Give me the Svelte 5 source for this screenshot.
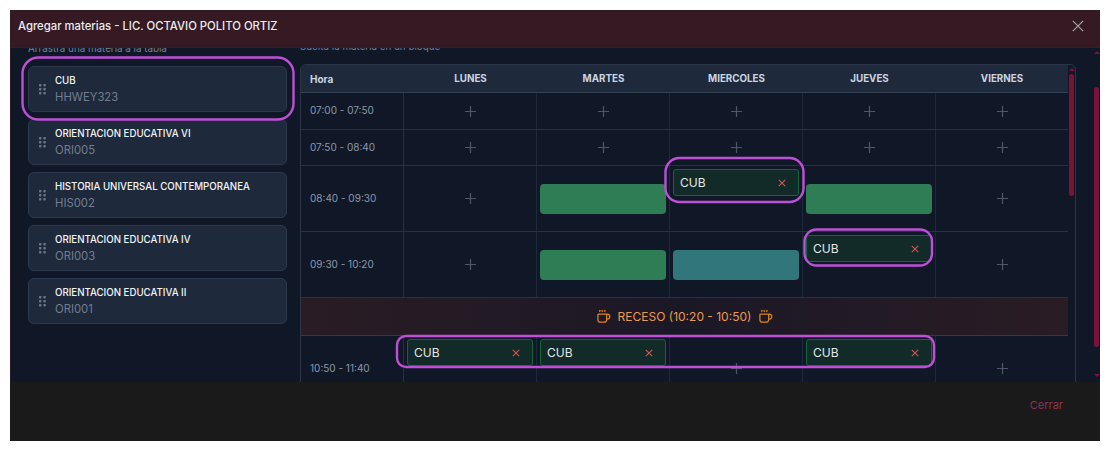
<script>
  const subjects = [
    { name: 'CUB', code: 'HHWEY323' },
    { name: 'ORIENTACION EDUCATIVA VI', code: 'ORI005' },
    { name: 'HISTORIA UNIVERSAL CONTEMPORANEA', code: 'HIS002' },
    { name: 'ORIENTACION EDUCATIVA IV', code: 'ORI003' },
    { name: 'ORIENTACION EDUCATIVA II', code: 'ORI001' }
  ];
  const days = ['LUNES', 'MARTES', 'MIERCOLES', 'JUEVES', 'VIERNES'];
  const rows = [
    { time: '07:00 - 07:50', size: 'r1', cells: ['', '', '', '', ''] },
    { time: '07:50 - 08:40', size: 'r2', cells: ['', '', '', '', ''] },
    { time: '08:40 - 09:30', size: 'r3', cells: ['', 'green', 'chip', 'green', ''] },
    { time: '09:30 - 10:20', size: 'r3', cells: ['', 'green', 'teal', 'chip', ''] },
    { recess: 'RECESO (10:20 - 10:50)' },
    { time: '10:50 - 11:40', size: 'r3', cells: ['chip', 'chip', '', 'chip', ''] }
  ];
</script>

{#snippet coffee()}
  <svg class="coffee" viewBox="0 0 24 24" fill="none" stroke="currentColor" stroke-width="2" stroke-linecap="round" stroke-linejoin="round">
    <path d="M10 2v2" /><path d="M14 2v2" /><path d="M6 2v2" />
    <path d="M16 8a1 1 0 0 1 1 1v8a4 4 0 0 1-4 4H7a4 4 0 0 1-4-4V9a1 1 0 0 1 1-1h14a4 4 0 1 1 0 8h-1" />
  </svg>
{/snippet}

<div class="modal">
  <header class="head">
    <h1>Agregar materias - LIC. OCTAVIO POLITO ORTIZ</h1>
    <button class="close" aria-label="Cerrar">
      <svg viewBox="0 0 12 12" fill="none" stroke="currentColor" stroke-width="1.2"><path d="M.8.8l10.4 10.4M11.2.8.8 11.2" /></svg>
    </button>
  </header>

  <div class="body">
    <div class="content">
      <aside class="left">
        <p class="hint">Arrastra una materia a la tabla</p>
        <div class="list">
          {#each subjects as s}
            <div class="card">
              <svg class="grip" viewBox="0 0 7 11" fill="currentColor">
                {#each [0, 4, 8] as y}
                  <rect x="0" {y} width="2.4" height="2.4" rx=".6" />
                  <rect x="4.4" {y} width="2.4" height="2.4" rx=".6" />
                {/each}
              </svg>
              <div>
                <div class="name">{s.name}</div>
                <div class="code">{s.code}</div>
              </div>
            </div>
          {/each}
        </div>
      </aside>

      <section class="right">
        <p class="hint hint2">Suelta la materia en un bloque</p>
        <div class="table">
          <div class="grid">
            <div class="row thead">
              <div class="hora">Hora</div>
              {#each days as d}<div class="day">{d}</div>{/each}
            </div>
            {#each rows as r}
              {#if r.recess}
                <div class="recess">
                  {@render coffee()}<span>{r.recess}</span>{@render coffee()}
                </div>
              {:else}
                <div class="row {r.size}">
                  <div class="time">{r.time}</div>
                  {#each r.cells as c}
                    <div class="cell">
                      {#if c === 'chip'}
                        <div class="chip">
                          <span>CUB</span>
                          <svg viewBox="0 0 8 8" fill="none" stroke="currentColor" stroke-width="1.1"><path d="M.8.8l6.4 6.4M7.2.8.8 7.2" /></svg>
                        </div>
                      {:else if c}
                        <div class="block {c}"></div>
                      {:else}
                        <svg class="plus" viewBox="0 0 11 11" fill="none" stroke="currentColor" stroke-width="1.2"><path d="M5.5 0v11M0 5.5h11" /></svg>
                      {/if}
                    </div>
                  {/each}
                </div>
              {/if}
            {/each}
          </div>
          <div class="rail inner">
            <i class="up"></i>
            <b></b>
          </div>
        </div>
      </section>
    </div>
    <div class="rail outer">
      <i class="up"></i>
      <b></b>
      <i class="down"></i>
    </div>
  </div>

  <footer class="foot"><button class="cerrar">Cerrar</button></footer>

  <svg class="marks" viewBox="0 0 1109 451" fill="none" stroke="#bd50d6" stroke-width="2.4">
    <rect x="22.5" y="57.5" width="271" height="62" rx="16" />
    <rect x="665.5" y="158" width="138" height="44" rx="14" />
    <rect x="804.5" y="229.5" width="127.5" height="36" rx="12" />
    <rect x="397" y="336" width="537" height="31" rx="9" />
  </svg>
</div>

<style>
  :global(body) {
    margin: 0;
    background: #fff;
  }
  .modal {
    position: relative;
    box-sizing: border-box;
    width: 1090px;
    height: 431px;
    margin: 10px 0 0 10px;
    display: flex;
    flex-direction: column;
    background: #101828;
    font-family: Inter, "Liberation Sans", sans-serif;
    overflow: hidden;
  }
  .head {
    box-sizing: border-box;
    height: 38px;
    flex: none;
    display: flex;
    align-items: center;
    justify-content: space-between;
    padding: 0 16px 6px 8px;
    background: #351923;
    border-bottom: 1px solid #4d1428;
    position: relative;
    z-index: 1;
  }
  h1 {
    margin: 0;
    font-size: 11.3px;
    font-weight: 500;
    color: #ececee;
  }
  .close {
    width: 12px;
    height: 12px;
    padding: 0;
    border: 0;
    background: none;
    color: #a8a3a5;
    display: flex;
  }
  .close svg { width: 12px; height: 12px; }
  .body {
    flex: 1;
    min-height: 0;
    display: flex;
    overflow: hidden;
    border-left: 1px solid #2b1525;
    padding-left: 17px;
  }
  .content {
    width: 1048px;
    display: flex;
    gap: 13px;
    flex: none;
    margin-top: -9px;
  }
  .left { width: 259px; flex: none; }
  .right { width: 776px; flex: none; }
  .hint {
    margin: 3px 0 0;
    height: 24px;
    font-size: 9.8px;
    line-height: 14px;
    color: #71829b;
  }
  .hint2 { margin-top: 1px; height: 24px; }
  .list {
    display: flex;
    flex-direction: column;
    gap: 7px;
  }
  .card {
    box-sizing: border-box;
    height: 46px;
    display: flex;
    align-items: center;
    gap: 9px;
    padding-left: 10px;
    background: #1e293b;
    border: 1px solid #2c394d;
    border-radius: 6px;
  }
  .grip {
    width: 7px;
    height: 11px;
    color: #6b7686;
    flex: none;
  }
  .name {
    font-size: 9.7px;
    line-height: 13px;
    font-weight: 500;
    color: #f1f5f9;
    margin-bottom: 2px;
  }
  .code {
    font-size: 11.3px;
    line-height: 16px;
    color: #727e8f;
  }
  .table {
    display: flex;
    height: 400px;
    border: 1px solid #2a3648;
    border-radius: 6px;
    overflow: hidden;
    background: #101828;
  }
  .grid { width: 767px; flex: none; }
  .row {
    display: grid;
    grid-template-columns: 103px 133px 133px 133px 133px 132px;
    box-sizing: border-box;
    border-bottom: 1px solid #263142;
  }
  .thead {
    height: 28px;
    background: #1e293b;
    align-items: center;
    border-bottom-color: #334155;
  }
  .r1 { height: 37px; }
  .r2 { height: 36px; }
  .r3 { height: 66px; }
  .hora {
    padding-left: 9px;
    font-size: 10px;
    font-weight: 700;
    color: #cbd5e1;
  }
  .day {
    text-align: center;
    font-size: 9.8px;
    font-weight: 700;
    color: #cbd5e1;
  }
  .time {
    display: flex;
    align-items: center;
    padding: 0 0 2px 9px;
    font-size: 10px;
    color: #8b98aa;
    border-right: 1px solid #263142;
  }
  .cell {
    display: flex;
    align-items: center;
    justify-content: center;
    border-right: 1px solid #1e293b;
    padding: 0 3px 0 3px;
    min-width: 0;
  }
  .cell:last-child { border-right: 0; }
  .plus { width: 11px; height: 11px; color: #4b5668; }
  .block {
    width: 100%;
    height: 30px;
    box-sizing: border-box;
    border-radius: 4px;
  }
  .green { background: #2f7d55; }
  .teal { background: #30767a; }
  .chip {
    box-sizing: border-box;
    width: 100%;
    height: 27px;
    align-self: flex-start;
    margin-top: 3px;
    display: flex;
    align-items: center;
    justify-content: space-between;
    padding: 0 12px 0 6px;
    background: #122a28;
    border: 1px solid #11663a;
    border-radius: 3px;
    font-size: 12px;
    color: #e5e7eb;
  }
  .chip svg { width: 8px; height: 8px; color: #d9534f; }
  .recess {
    box-sizing: border-box;
    height: 38px;
    display: flex;
    align-items: center;
    justify-content: center;
    gap: 7px;
    background: linear-gradient(90deg, #2a1c24, #1b1826 50%, #2a1c24);
    border-bottom: 1px solid #2f3a4c;
    font-size: 12px;
    color: #ec9a52;
  }
  .coffee { width: 15px; height: 15px; color: #dd8316; }
  .rail {
    flex: none;
    position: relative;
  }
  .rail b {
    display: block;
    background: #7c1238;
    border-radius: 3px;
  }
  .rail i {
    display: block;
    width: 0;
    height: 0;
    border-left: 3px solid transparent;
    border-right: 3px solid transparent;
    margin: 0 auto;
  }
  .rail .up { border-bottom: 3px solid #7c1238; }
  .rail .down { border-top: 3px solid #7c1238; margin-top: 27px; }
  .inner { width: 7px; padding-top: 3px; }
  .inner b { width: 5px; height: 122px; margin: 3px 0 0 1px; }
  .outer { width: 6px; margin-left: 18px; padding-top: 3px; }
  .outer b { width: 5px; height: 260px; margin-top: 33px; }
  .foot {
    box-sizing: border-box;
    height: 59px;
    flex: none;
    display: flex;
    justify-content: flex-end;
    padding: 16px 37px 0 0;
    background: #1a1a1a;
    position: relative;
  }
  .cerrar {
    height: 15px;
    padding: 0;
    border: 0;
    background: none;
    font: inherit;
    font-size: 11px;
    line-height: 15px;
    color: #8e3456;
  }
  .marks {
    position: absolute;
    left: -10px;
    top: -10px;
    width: 1109px;
    height: 451px;
    pointer-events: none;
    z-index: 2;
  }
</style>
